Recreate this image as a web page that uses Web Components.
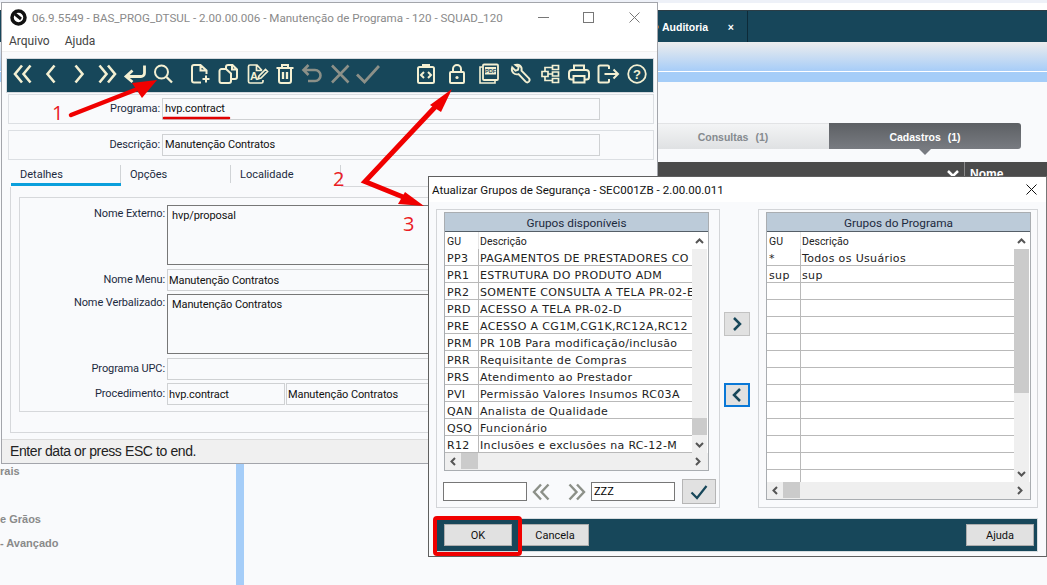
<!DOCTYPE html>
<html>
<head>
<meta charset="utf-8">
<title>Manutenção de Programa</title>
<style>
  html, body { margin: 0; padding: 0; }
  body { width: 1047px; height: 585px; overflow: hidden; position: relative; background: #f9fafc; font-family: Roboto, sans-serif; }
</style>
</head>
<body>
<desk-backdrop></desk-backdrop>

<main-window title-text="06.9.5549 - BAS_PROG_DTSUL - 2.00.00.006 - Manutenção de Programa - 120 - SQUAD_120">
  <tool-bar slot="toolbar">
    <tool-icon name="first" w="28"></tool-icon><tool-icon name="prev" w="28"></tool-icon><tool-icon name="next" w="28"></tool-icon><tool-icon name="last" w="28"></tool-icon><tool-icon name="enter" w="28"></tool-icon><tool-icon name="search" w="28"></tool-icon>
    <tool-icon name="add" w="28" gap="9"></tool-icon><tool-icon name="copy" w="28"></tool-icon><tool-icon name="edit" w="30"></tool-icon><tool-icon name="trash" w="26"></tool-icon><tool-icon name="undo" w="28" dim></tool-icon><tool-icon name="cancel" w="28" dim></tool-icon><tool-icon name="check" w="28" dim></tool-icon>
    <tool-icon name="code" w="30" gap="29"></tool-icon><tool-icon name="lock" w="32"></tool-icon><tool-icon name="pdf" w="31"></tool-icon><tool-icon name="wrench" w="31"></tool-icon><tool-icon name="tree" w="30"></tool-icon><tool-icon name="print" w="28"></tool-icon><tool-icon name="exit" w="30"></tool-icon><tool-icon name="help" w="28"></tool-icon>
  </tool-bar>
  <top-field slot="program" label="Programa:">hvp.contract</top-field>
  <top-field slot="description" label="Descrição:">Manutenção Contratos</top-field>
  <form-row label="Nome Externo:" h="60" dark top>hvp/proposal</form-row>
  <form-row label="Nome Menu:" h="22">Manutenção Contratos</form-row>
  <form-row label="Nome Verbalizado:" h="60" dark top>Manutenção Contratos</form-row>
  <form-row label="Programa UPC:" h="22"></form-row>
  <form-row label="Procedimento:" h="22" second="Manutenção Contratos">hvp.contract</form-row>
</main-window>

<group-dialog title-text="Atualizar Grupos de Segurança - SEC001ZB - 2.00.00.011">
  <group-list slot="left" heading="Grupos disponíveis" thumb="left">
    <list-row gu="PP3">PAGAMENTOS DE PRESTADORES CO</list-row>
    <list-row gu="PR1">ESTRUTURA DO PRODUTO ADM</list-row>
    <list-row gu="PR2">SOMENTE CONSULTA A TELA PR-02-E</list-row>
    <list-row gu="PRD">ACESSO A TELA PR-02-D</list-row>
    <list-row gu="PRE">ACESSO A CG1M,CG1K,RC12A,RC12</list-row>
    <list-row gu="PRM">PR 10B Para modificação/inclusão</list-row>
    <list-row gu="PRR">Requisitante de Compras</list-row>
    <list-row gu="PRS">Atendimento ao Prestador</list-row>
    <list-row gu="PVI">Permissão Valores Insumos RC03A</list-row>
    <list-row gu="QAN">Analista de Qualidade</list-row>
    <list-row gu="QSQ">Funcionário</list-row>
    <list-row gu="R12">Inclusões e exclusões na RC-12-M</list-row>
  </group-list>
  <group-list slot="right" heading="Grupos do Programa" thumb="right">
    <list-row gu="*">Todos os Usuários</list-row>
    <list-row gu="sup">sup</list-row>
    <list-row></list-row><list-row></list-row><list-row></list-row><list-row></list-row><list-row></list-row>
    <list-row></list-row><list-row></list-row><list-row></list-row><list-row></list-row><list-row></list-row><list-row></list-row><list-row></list-row>
  </group-list>
  <flat-btn slot="footer-left">OK</flat-btn>
  <flat-btn slot="footer-left">Cancela</flat-btn>
  <flat-btn slot="footer-right">Ajuda</flat-btn>
</group-dialog>

<annot-layer></annot-layer>

<script>
// icons of the toolbar, every one in a 24 box centred on its cell
const ICONS = {
  first: '<g stroke-width="2.6"><path d="M11 3.5 4 12l7 8.5M19.5 3.5 12.5 12l7 8.5"/></g>',
  prev: '<path stroke-width="2.6" d="M15.5 3.5 8.5 12l7 8.5"/>',
  next: '<path stroke-width="2.6" d="M8.5 3.5 15.5 12l-7 8.5"/>',
  last: '<path stroke-width="2.6" d="M4.500 3.5 11.500 12l-7 8.500M13 3.5 20 12l-7 8.500"/>',
  enter: '<path stroke-width="2.8" d="M21.500 3.500V11a3.500 3.500 0 0 1-3.500 3.500H3M9.500 8.500 3 14.500l6.500 5.500"/>',
  search: '<circle cx="10.500" cy="10" r="6.500"/><path stroke-width="2.300" d="m15.500 15 5.500 5.500"/>',
  add: '<path d="M13 20.500H6a2 2 0 0 1-2-2V5a2 2 0 0 1 2-2h6.500l6 5.500V12M12.500 3v5.500h6M14.500 17h7M18 13.500v7"/>',
  copy: '<path d="M10 6.500V5a2 2 0 0 1 2-2h4.500l4.500 4.500V15a2 2 0 0 1-2 2h-3M16 3v4.500h5M5.500 7H10l5 4.500V19a2 2 0 0 1-2 2H5.500a2 2 0 0 1-2-2V9a2 2 0 0 1 2-2Z"/>',
  edit: '<path stroke-width="1.700" d="M17 8.500 12 3H5a1.500 1.500 0 0 0-1.500 1.500v15A1.500 1.500 0 0 0 5 21h11.500a1.500 1.500 0 0 0 1.500-1.500V18M11.500 3v5.500H17M13 17l1-3 6.500-6.500 2 2-6.500 6.500Z"/><text x="5" y="18" font-family="Liberation Sans, sans-serif" font-size="11" font-weight="700" fill="currentColor" stroke="none">A</text>',
  trash: '<path d="M3.500 6h17M9 5.500V3h6v2.500M6 6v13a2 2 0 0 0 2 2h8a2 2 0 0 0 2-2V6"/><path stroke-width="2.300" d="M10 10v7M14 10v7"/>',
  undo: '<path stroke-width="2.600" d="M8.500 3 3.500 8l5 5M4 8h11a5.500 5.500 0 0 1 0 11H8"/>',
  cancel: '<path stroke-width="2.600" d="m4 3.500 16.500 17M20.500 3.500 4 20.500"/>',
  check: '<path stroke-width="2.800" d="M1 12.500 8.500 20 23 4"/>',
  code: '<rect x="4" y="5" width="16" height="16" rx="1.500"/><path d="M9 5V3h6v2" stroke-width="2"/><path stroke-width="2" d="M10 10l-3 3 3 3M14 10l3 3-3 3"/>',
  lock: '<rect x="5" y="10" width="14" height="11" rx="1"/><path d="M8 10V7a4 4 0 0 1 8 0v3"/><circle cx="12" cy="15.500" r="1.600" fill="currentColor" stroke="none"/>',
  pdf: '<path stroke-width="1.600" d="M5.500 5H3v16h15v-2.500"/><rect x="6" y="2.500" width="15" height="15.500" rx="1" stroke-width="1.800"/><rect x="8" y="5" width="11" height="7.500" fill="currentColor" stroke="none"/><text x="13.500" y="11" text-anchor="middle" font-family="Liberation Sans, sans-serif" font-size="5.500" font-weight="700" fill="#17475a" stroke="none">PDF</text>',
  wrench: '<path stroke-width="1.900" d="M4.200 5.300 7.500 8.600 10 7.800l.6-2.600-3.200-2.300C11 1.700 14.400 4.400 13.500 8.700L21 16.400c1 1.200.7 2.300-.1 3.200-1 .9-2.300 1-3.300 0L10.500 12.100C6.500 13.200 2.600 9.800 4.200 5.300Z"/>',
  tree: '<path stroke-width="1.700" d="M4 9.500h6v5H4ZM14.500 3.500h6v4h-6ZM14.500 10h6v4h-6ZM14.500 16.500h6v4h-6ZM7 9.500V5.500h7.500M10 12h4.500M7 14.500v4h7.500"/>',
  print: '<path d="M7 8V3.500h10V8M6 17.500H4.500A2.500 2.500 0 0 1 2 15v-4a3 3 0 0 1 3-3h14a3 3 0 0 1 3 3v4a2.500 2.500 0 0 1-2.500 2.500H18M6.500 14h11v6.500h-11Z"/>',
  exit: '<path d="M13 7V5a1.500 1.500 0 0 0-1.500-1.500H4A1.500 1.500 0 0 0 2.500 5v14A1.500 1.500 0 0 0 4 20.500h7.500A1.500 1.500 0 0 0 13 19v-2M8.500 12H22M17.500 7.500 22 12l-4.500 4.500"/>',
  help: '<circle cx="12" cy="12" r="8.800" stroke-width="1.800"/><text x="12" y="16.500" text-anchor="middle" font-family="Liberation Sans, sans-serif" font-size="13" font-weight="700" fill="currentColor" stroke="none">?</text>'
};

class ToolIcon extends HTMLElement {
  connectedCallback() {
    const root = this.attachShadow({ mode: 'open' });
    const w = this.getAttribute('w') || 28;
    const gap = this.getAttribute('gap') || 0;
    const color = this.hasAttribute('dim') ? '#8c9088' : '#f4f0d2';
    root.innerHTML = `
    <style>
      :host { display: flex; align-items: center; justify-content: center; flex: none; width: ${w}px; margin-left: ${gap}px; height: 100%; color: ${color}; padding-bottom: 3px; box-sizing: border-box; }
      svg { flex: none; fill: none; stroke: currentColor; stroke-width: 2; }
    </style>
    <svg width="24" height="24" viewBox="0 0 24 24">${ICONS[this.getAttribute('name')]}</svg>`;
  }
}
customElements.define('tool-icon', ToolIcon);

class ToolBar extends HTMLElement {
  connectedCallback() {
    this.attachShadow({ mode: 'open' }).innerHTML = `
    <style>
      :host { display: flex; height: 33px; margin: 0 4px 0 5px; padding-left: 2px; background: #17475a; outline: 1px solid #d5d9de; }
    </style>
    <slot></slot>`;
  }
}
customElements.define('tool-bar', ToolBar);

// the page that stays behind the two windows
class DeskBackdrop extends HTMLElement {
  connectedCallback() {
    this.attachShadow({ mode: 'open' }).innerHTML = `
    <style>
      :host { display: flex; flex-direction: column; width: 1047px; height: 585px; background: #f9fafc; font: 700 10.500px "Liberation Sans", sans-serif; overflow: hidden; }
      .strip { height: 3px; background: #eef1f8; }
      .gap { height: 7px; background: #fff; }
      .nav { height: 32px; flex: none; background: #17465a; border-top: 1px solid #2b3d46; box-sizing: border-box; display: flex; align-items: center; padding-left: 655px; color: #fff; }
      .dot { width: 4px; height: 4px; border-radius: 50%; background: #c4763c; margin-right: 3px; }
      .tab { width: 86px; height: 100%; display: flex; align-items: center; justify-content: space-between; padding-right: 13px; box-sizing: border-box; border-right: 1px solid #0d2a38; }
      .shade { height: 30px; flex: none; background: linear-gradient(#ededed, #a7cdf8); border-bottom: 1px solid #fff; box-sizing: border-box; }
      .band { height: 10px; flex: none; background: #a5cdf8; }
      .lower { flex: 1; display: flex; }
      .side { width: 236px; flex: none; padding-top: 381px; box-sizing: border-box; color: #8a8a8a; font-size: 11px; }
      .side div { height: 24px; line-height: 16px; }
      .bar { width: 8px; flex: none; background: #a5cdf8; }
      .main { flex: 1; padding-top: 41px; }
      .tabs { display: flex; height: 26px; margin-left: 413px; width: 364px; }
      .tabs div { display: flex; align-items: center; justify-content: center; gap: 7px; padding-top: 1px; box-sizing: border-box; }
      .off { width: 172px; background: linear-gradient(#f3f4f5, #dfe1e3); color: #858a8f; border-top: 1px solid #e2e3e5; padding-right: 20px; }
      .on { width: 192px; background: linear-gradient(#5d6064, #787b81); color: #fff; border-radius: 0 3px 3px 0; }
      .tip { margin-left: 675px; width: 0; height: 0; border: 6px solid transparent; border-top-color: #787b81; border-bottom: 0; }
      .head { margin-top: 7px; height: 14px; background: #4b4b4b; display: flex; color: #fff; font-size: 12px; line-height: 25px; justify-content: flex-end; overflow: hidden; }
      .head svg { margin: 8px 5px 0 0; }
      .nome { width: 83px; border-left: 1px solid #8a8a8a; padding-left: 5px; box-sizing: border-box; }
    </style>
    <div class="strip"></div><div class="gap"></div>
    <div class="nav"><span class="dot"></span><div class="tab"><span>Auditoria</span><span>×</span></div></div>
    <div class="shade"></div><div class="band"></div>
    <div class="lower">
      <div class="side"><div>rais</div><div></div><div>e Grãos</div><div>- Avançado</div></div>
      <div class="bar"></div>
      <div class="main">
        <div class="tabs"><div class="off"><span>Consultas</span><span>(1)</span></div><div class="on"><span>Cadastros</span><span>(1)</span></div></div>
        <div class="tip"></div>
        <div class="head"><svg width="12" height="8" viewBox="0 0 12 8"><path d="M1 1l5 5 5-5" fill="none" stroke="#fff" stroke-width="2.500"/></svg><div class="nome">Nome</div></div>
      </div>
    </div>`;
  }
}
customElements.define('desk-backdrop', DeskBackdrop);

// field on the top of the main window, in its own group box
class TopField extends HTMLElement {
  connectedCallback() {
    this.attachShadow({ mode: 'open' }).innerHTML = `
    <style>
      :host { display: flex; align-items: center; height: 30px; margin: 0 3px 0 6px; box-sizing: border-box; border: 1px solid #dcdfe3; font-size: 11px; letter-spacing: -.1px; color: #1c2a3e; }
      .lab { width: 153px; text-align: right; padding-right: 2px; box-sizing: border-box; flex: none; margin-top: -2px; }
      .box { width: 438px; height: 22px; box-sizing: border-box; border: 1px solid #cfd1d3; line-height: 20px; padding-left: 2px; color: #111; }
    </style>
    <span class="lab">${this.getAttribute('label')}</span><div class="box"><slot></slot></div>`;
  }
}
customElements.define('top-field', TopField);

class FormRow extends HTMLElement {
  connectedCallback() {
    const h = this.getAttribute('h');
    const dark = this.hasAttribute('dark');
    const second = this.getAttribute('second');
    this.attachShadow({ mode: 'open' }).innerHTML = `
    <style>
      :host { display: flex; height: ${h}px; font-size: 11px; letter-spacing: -.1px; color: #1c2a3e; }
      .lab { width: 147px; flex: none; text-align: right; padding: 0 2px 0 0; box-sizing: border-box; line-height: ${dark ? 18 : 21}px; }
      .box { height: 100%; box-sizing: border-box; border: 1px solid ${dark ? '#777' : '#cfd1d3'}; color: #111; padding-left: ${dark ? 4 : 1}px; line-height: ${dark ? 15 : 21}px; padding-top: ${dark ? 2 : 0}px; }
      .main { flex: 1; }
      .half { width: 118px; margin-right: 1px; flex: none; }
    </style>
    <span class="lab">${this.getAttribute('label')}</span>
    ${second ? `<div class="box half"><slot></slot></div><div class="box main">${second}</div>` : `<div class="box main"><slot></slot></div>`}`;
  }
}
customElements.define('form-row', FormRow);

class MainWindow extends HTMLElement {
  connectedCallback() {
    this.attachShadow({ mode: 'open' }).innerHTML = `
    <style>
      :host { position: absolute; left: 1px; top: 2px; width: 657px; height: 462px; box-sizing: border-box; border: 1px solid #a3a5ab; background: #f9fafc; display: flex; flex-direction: column; font-family: Roboto, sans-serif; }
      .title { height: 29px; flex: none; display: flex; align-items: center; background: #fff; color: #8a8a8a; font-size: 11.600px; }
      .title svg.logo { margin: 0 5px 0 8px; flex: none; }
      .title span { white-space: nowrap; }
      .ctl { display: flex; align-items: center; flex: none; margin-left: auto; }
      .menu { height: 19px; flex: none; background: #fff; display: flex; gap: 15px; padding-left: 7px; font-size: 12px; color: #444; line-height: 19px; border-bottom: 1px solid #f0f0f0; }
      .tb { margin-top: 7px; }
      .top { margin-top: 2px; }
      .top.second { margin-top: 6px; }
      .tabs { height: 27px; flex: none; display: flex; margin: 0 3px 0 9px; font-size: 11px; color: #1c2a3e; }
      .tabs div { width: 110px; height: 18px; margin-top: 5px; padding-left: 9px; box-sizing: border-box; border-right: 1px solid #d0d3d6; line-height: 19px; position: relative; }
      .tabs div.sel::after { content: ""; position: absolute; left: 0; right: -1px; top: 18px; height: 3px; background: #0a9fdc; }
      .tabs .fill { flex: 1; height: 27px; margin: 0; border-right: 0; border-bottom: 1px solid #d6d8db; }
      .panel { height: 246px; flex: none; box-sizing: border-box; margin: 0 3px 0 8px; border: 1px solid #d6d8db; border-top: 0; padding: 10px 13px 20px 8px; }
      .group { height: 100%; box-sizing: border-box; border: 1px solid #d6d8db; padding: 7px 0 6px 0; display: flex; flex-direction: column; justify-content: space-between; }
      .status { margin-top: auto; height: 24px; flex: none; background: #f0f0f0; border-top: 1px solid #dcdcdc; box-sizing: border-box; font: 14px/23px "Liberation Sans", sans-serif; letter-spacing: -.4px; color: #222; padding-left: 8px; }
    </style>
    <div class="title">
      <svg class="logo" width="17" height="17" viewBox="0 0 17 17"><circle cx="8.500" cy="8.500" r="6.500" fill="none" stroke="#111" stroke-width="3.500"/><path d="M5 5l6 5" stroke="#111" stroke-width="3"/></svg>
      <span>${this.getAttribute('title-text')}</span>
      <div class="ctl">
        <svg width="11" height="11" viewBox="0 0 11 11" style="margin-right:34px"><path d="M0 5.500h11" stroke="#777"/></svg>
        <svg width="11" height="11" viewBox="0 0 11 11" style="margin-right:35px"><rect x=".5" y=".5" width="10" height="10" fill="none" stroke="#777"/></svg>
        <svg width="11" height="11" viewBox="0 0 11 11" style="margin-right:17px"><path d="M.5.5l10 10M10.500.5l-10 10" stroke="#777"/></svg>
      </div>
    </div>
    <div class="menu"><span>Arquivo</span><span>Ajuda</span></div>
    <div class="tb"><slot name="toolbar"></slot></div>
    <div class="top"><slot name="program"></slot></div>
    <div class="top second"><slot name="description"></slot></div>
    <div class="tabs"><div class="sel">Detalhes</div><div>Opções</div><div>Localidade</div><div class="fill"></div></div>
    <div class="panel"><div class="group"><slot></slot></div></div>
    <div class="status">Enter data or press ESC to end.</div>`;
  }
}
customElements.define('main-window', MainWindow);

class ListRow extends HTMLElement {
  connectedCallback() {
    this.attachShadow({ mode: 'open' }).innerHTML = `
    <style>
      :host { display: flex; height: 17px; flex: none; box-sizing: border-box; border-bottom: 1px solid #b9b9b9; font: 11px/20px "DejaVu Sans", sans-serif; letter-spacing: .35px; color: #222; white-space: nowrap; overflow: hidden; }
      .gu { width: 34px; flex: none; box-sizing: border-box; border-right: 1px solid #b9b9b9; padding-left: 2px; }
      .de { padding-left: 1px; }
    </style>
    <div class="gu">${this.getAttribute('gu') || ''}</div><div class="de"><slot></slot></div>`;
  }
}
customElements.define('list-row', ListRow);

class GroupList extends HTMLElement {
  connectedCallback() {
    const left = this.getAttribute('thumb') === 'left';
    const arrow = d => `<svg width="9" height="6" viewBox="0 0 9 6"><path d="${d}" fill="none" stroke="#555" stroke-width="2"/></svg>`;
    this.attachShadow({ mode: 'open' }).innerHTML = `
    <style>
      :host { display: flex; flex-direction: column; width: 265px; height: ${left ? 259 : 288}px; box-sizing: border-box; border: 1px solid #a9adb1; background: #fff; font-family: Roboto, sans-serif; }
      .heading { height: 19px; flex: none; background: #bccbd9; border-bottom: 1px solid #555f68; box-sizing: border-box; text-align: center; font-size: 11.800px; line-height: 20px; color: #1c2a3e; }
      .mid { flex: 1; min-height: 0; display: flex; }
      .rows { flex: 1; min-width: 0; display: flex; flex-direction: column; overflow: hidden; }
      .hd { height: 17px; flex: none; display: flex; font-size: 10.500px; line-height: 19px; color: #222; }
      .hd span:first-child { width: 34px; flex: none; padding-left: 2px; box-sizing: border-box; border-right: 1px solid #e6e6e6; }
      .hd span:last-child { padding-left: 1px; }
      .vs { width: 15px; flex: none; background: #efefef; margin-right: 1px; display: flex; flex-direction: column; align-items: center; }
      .up { height: 17px; flex: none; display: flex; align-items: center; justify-content: center; background: #fff; width: 100%; }
      .track { flex: 1; width: 100%; padding-top: ${left ? 169 : 0}px; box-sizing: border-box; }
      .track i { display: block; height: ${left ? 17 : 144}px; background: #cbcbcb; }
      .dn { height: 17px; flex: none; display: flex; align-items: center; justify-content: center; }
      .hs { height: 17px; flex: none; background: #efefef; display: flex; align-items: center; padding: 0 7px 1px 5px; box-sizing: border-box; }
      .hs i { width: 17px; height: 100%; background: #cbcbcb; margin: 0 auto 0 5px; }
    </style>
    <div class="heading">${this.getAttribute('heading')}</div>
    <div class="mid">
      <div class="rows"><div class="hd"><span>GU</span><span>Descrição</span></div><slot></slot></div>
      <div class="vs"><div class="up">${arrow('M1 5l3.500-3.500L8 5')}</div><div class="track"><i></i></div><div class="dn">${arrow('M1 1l3.500 3.500L8 1')}</div></div>
    </div>
    <div class="hs"><svg width="6" height="9" viewBox="0 0 6 9"><path d="M5 1L1.500 4.500 5 8" fill="none" stroke="#555" stroke-width="2"/></svg><i></i><svg width="6" height="9" viewBox="0 0 6 9"><path d="M1 1l3.500 3.500L1 8" fill="none" stroke="#555" stroke-width="2"/></svg></div>`;
  }
}
customElements.define('group-list', GroupList);

class FlatBtn extends HTMLElement {
  connectedCallback() {
    this.attachShadow({ mode: 'open' }).innerHTML = `
    <style>
      :host { display: flex; align-items: center; justify-content: center; width: 68px; height: 22px; box-sizing: border-box; background: #e1e1e1; border: 1px solid #adadad; font: 11px Roboto, sans-serif; color: #111; }
    </style>
    <slot></slot>`;
  }
}
customElements.define('flat-btn', FlatBtn);

class GroupDialog extends HTMLElement {
  connectedCallback() {
    this.attachShadow({ mode: 'open' }).innerHTML = `
    <style>
      :host { position: absolute; left: 428px; top: 176px; width: 619px; height: 381px; box-sizing: border-box; border: 1px solid #5f5f5f; border-right-color: #777; background: #f9fafc; display: flex; flex-direction: column; font-family: Roboto, sans-serif; }
      .title { height: 25px; flex: none; background: #fff; display: flex; align-items: center; justify-content: space-between; padding: 0 9px 0 3px; font-size: 11.550px; color: #111; }
      .body { display: flex; margin: 7px 0 0 7px; height: 299px; flex: none; }
      .panel { box-sizing: border-box; height: 100%; border: 1px solid #d3d5d8; padding: 2px 0 0 7px; }
      .l { width: 284px; }
      .r { width: 280px; }
      .mid { width: 38px; flex: none; padding: 103px 0 0 4px; box-sizing: border-box; }
      .arr { width: 26px; height: 24px; box-sizing: border-box; background: #e1e1e1; border: 1px solid #c2c2c2; display: flex; align-items: center; justify-content: center; }
      .arr.foc { margin-top: 47px; border: 2px solid #0a78d7; }
      .find { display: flex; align-items: center; margin-top: 8px; height: 25px; margin-left: -1px; }
      .inp { width: 84px; height: 19px; box-sizing: border-box; background: #fff; border: 1px solid #777; font-size: 11px; line-height: 17px; padding-left: 2px; }
      .find svg.d { margin-left: 5px; flex: none; }
      .chk { width: 34px; height: 25px; margin-left: 7px; box-sizing: border-box; background: #e1e1e1; border: 1px solid #b5b5b5; display: flex; align-items: center; justify-content: center; }
      .foot { margin: 11px 9px 0 7px; height: 32px; flex: none; background: #17475a; display: flex; align-items: center; padding: 0 3px 0 8px; gap: 9px; outline: 1px solid #d8dde0; }
      .sp { flex: 1; }
    </style>
    <div class="title"><span>${this.getAttribute('title-text')}</span>
      <svg width="11" height="11" viewBox="0 0 11 11"><path d="M.5.5l10 10M10.500.5l-10 10" stroke="#111" fill="none"/></svg></div>
    <div class="body">
      <div class="panel l"><slot name="left"></slot>
        <div class="find">
          <div class="inp"></div>
          <svg class="d" width="18" height="18" viewBox="0 0 18 18"><path d="M9 1.500 2 9l7 7.500M16.500 1.500 9.500 9l7 7.500" fill="none" stroke="#8c9088" stroke-width="2.400"/></svg>
          <svg class="d" style="margin-left:18px" width="18" height="18" viewBox="0 0 18 18"><path d="M1.500 1.500 8.500 9l-7 7.500M9 1.500 16 9l-7 7.500" fill="none" stroke="#8c9088" stroke-width="2.400"/></svg>
          <div class="inp" style="margin-left:5px">ZZZ</div>
          <div class="chk"><svg width="18" height="16" viewBox="0 0 18 16"><path d="M1.500 8.500 7 14 16.500 2" fill="none" stroke="#17475a" stroke-width="2.200"/></svg></div>
        </div>
      </div>
      <div class="mid">
        <div class="arr"><svg width="10" height="14" viewBox="0 0 10 14"><path d="M2 1l6 6-6 6" fill="none" stroke="#17475a" stroke-width="2.500"/></svg></div>
        <div class="arr foc"><svg width="10" height="14" viewBox="0 0 10 14"><path d="M8 1L2 7l6 6" fill="none" stroke="#17475a" stroke-width="2.500"/></svg></div>
      </div>
      <div class="panel r"><slot name="right"></slot></div>
    </div>
    <div class="foot"><slot name="footer-left"></slot><div class="sp"></div><slot name="footer-right"></slot></div>`;
  }
}
customElements.define('group-dialog', GroupDialog);

// red marks that were painted over the screenshot
class AnnotLayer extends HTMLElement {
  connectedCallback() {
    this.attachShadow({ mode: 'open' }).innerHTML = `
    <style>
      :host { position: absolute; left: 0; top: 0; width: 1047px; height: 585px; pointer-events: none; }
      svg { display: block; }
      text { font: 20px "Open Sans", sans-serif; fill: #ea1c24; }
    </style>
    <svg width="1047" height="585" viewBox="0 0 1047 585">
      <path d="M71 115 135 90" stroke="#f00000" stroke-width="4.500" stroke-linecap="round"/>
      <path d="M157 80 132 83 142 98Z" fill="#f00000"/>
      <path d="M164 118H229" stroke="#e00000" stroke-width="2.500" stroke-linecap="round"/>
      <path d="M437 105 365 181.500 408 199" fill="none" stroke="#f00000" stroke-width="5"/>
      <path d="M452 89 430 105 441 112Z" fill="#f00000"/>
      <path d="M424 206 405 192 398 204Z" fill="#f00000"/>
      <text x="52" y="120">1</text>
      <text x="333" y="186">2</text>
      <text x="403" y="231">3</text>
      <rect x="435" y="518" width="85" height="36" rx="2" fill="none" stroke="#f00000" stroke-width="4"/>
    </svg>`;
  }
}
customElements.define('annot-layer', AnnotLayer);
</script>
</body>
</html>
